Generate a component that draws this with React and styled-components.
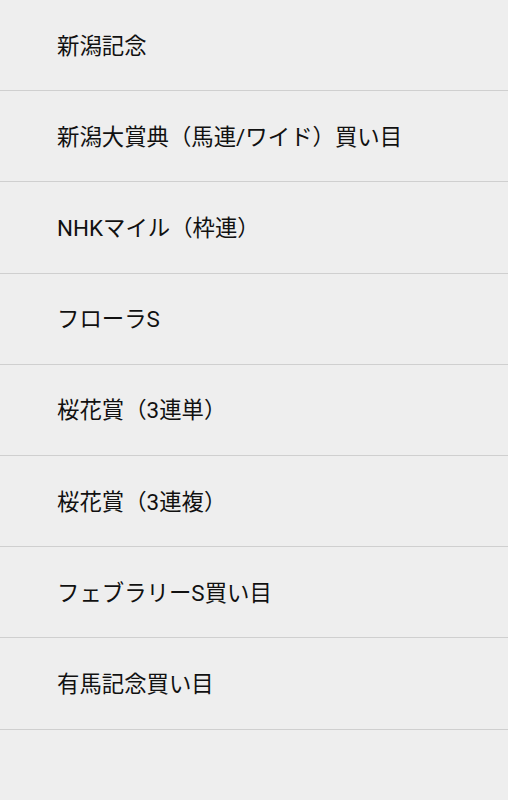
import React from "react";
import styled, { createGlobalStyle } from "styled-components";

const Global = createGlobalStyle`
  html, body { margin: 0; padding: 0; background: #eeeeee; }
  body { font-family: Roboto, "Noto Sans CJK JP", sans-serif; }
`;

const List = styled.ul`
  list-style: none;
  margin: 0;
  padding: 0;
  background: #eeeeee;
  min-height: 800px;
`;

const Row = styled.li`
  box-sizing: border-box;
  height: 91.2px;
  display: flex;
  align-items: center;
  padding: 0 0 3px 57px;
  border-bottom: 1px solid #cfcfcf;
  font-size: 22.4px;
  color: #111111;
  font-family: Roboto, "Noto Sans CJK JP", sans-serif;
`;

const items = [
  "新潟記念",
  "新潟大賞典（馬連/ワイド）買い目",
  "NHKマイル（枠連）",
  "フローラS",
  "桜花賞（3連単）",
  "桜花賞（3連複）",
  "フェブラリーS買い目",
  "有馬記念買い目",
];

export default function App() {
  return (
    <>
      <Global />
      <List>
        {items.map((t) => (
          <Row key={t}>{t}</Row>
        ))}
      </List>
    </>
  );
}
